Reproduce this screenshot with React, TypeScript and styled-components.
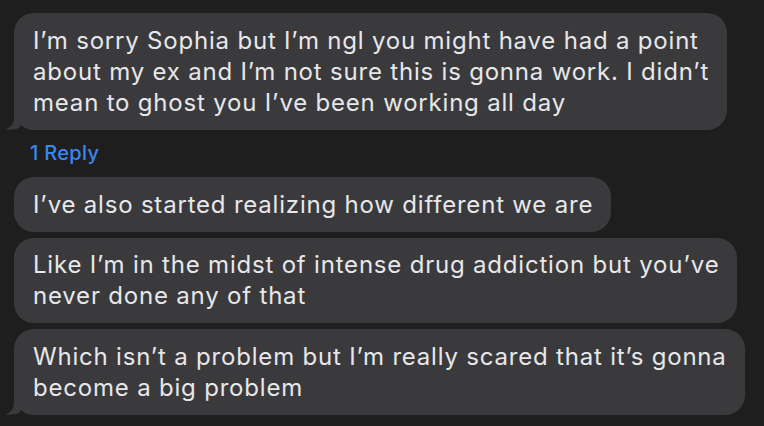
import React from 'react';
import styled, { createGlobalStyle } from 'styled-components';

const GlobalStyle = createGlobalStyle`
  html, body {
    margin: 0;
    padding: 0;
    background: #1e1e1e;
  }
  body {
    width: 764px;
    height: 426px;
    overflow: hidden;
    font-family: Inter, "Noto Sans", "Liberation Sans", sans-serif;
  }
`;

const Thread = styled.div`
  display: flex;
  flex-direction: column;
  align-items: flex-start;
  padding: 13px 0 0 14px;
`;

const Group = styled.div`
  display: flex;
  flex-direction: column;
  align-items: flex-start;
  gap: 6px;
`;

const Bubble = styled.div`
  position: relative;
  background: #3a3a3c;
  color: #e7e7ea;
  border-radius: 20px;
  padding: 11.5px 18px 12px 19px;
  font-size: 24px;
  letter-spacing: 0.8px;
  line-height: 31px;
  white-space: nowrap;
`;

const Tail = styled.svg`
  position: absolute;
  left: -10px;
  bottom: 0;
  width: 24px;
  height: 22px;
  fill: #3a3a3c;
`;

const Reply = styled.div`
  color: #3b86f3;
  font-size: 20px;
  font-weight: 500;
  letter-spacing: 0.3px;
  height: 47.5px;
  line-height: 47px;
  padding-left: 16px;
`;

const BubbleTail = () => (
  <Tail viewBox="0 0 24 22">
    <path d="M10 0 L10 10 C10 16 6 20 1 21.5 C6 22 12 21.5 16 19.5 L16 0 Z" />
  </Tail>
);

const App: React.FC = () => {
  return (
    <>
      <GlobalStyle />
      <Thread>
        <Bubble>
          I’m sorry Sophia but I’m ngl you might have had a point
          <br />
          about my ex and I’m not sure this is gonna work. I didn’t
          <br />
          mean to ghost you I’ve been working all day
          <BubbleTail />
        </Bubble>
        <Reply>1 Reply</Reply>
        <Group>
          <Bubble>I’ve also started realizing how different we are</Bubble>
          <Bubble>
            Like I’m in the midst of intense drug addiction but you’ve
            <br />
            never done any of that
          </Bubble>
          <Bubble>
            Which isn’t a problem but I’m really scared that it’s gonna
            <br />
            become a big problem
            <BubbleTail />
          </Bubble>
        </Group>
      </Thread>
    </>
  );
};

export default App;
